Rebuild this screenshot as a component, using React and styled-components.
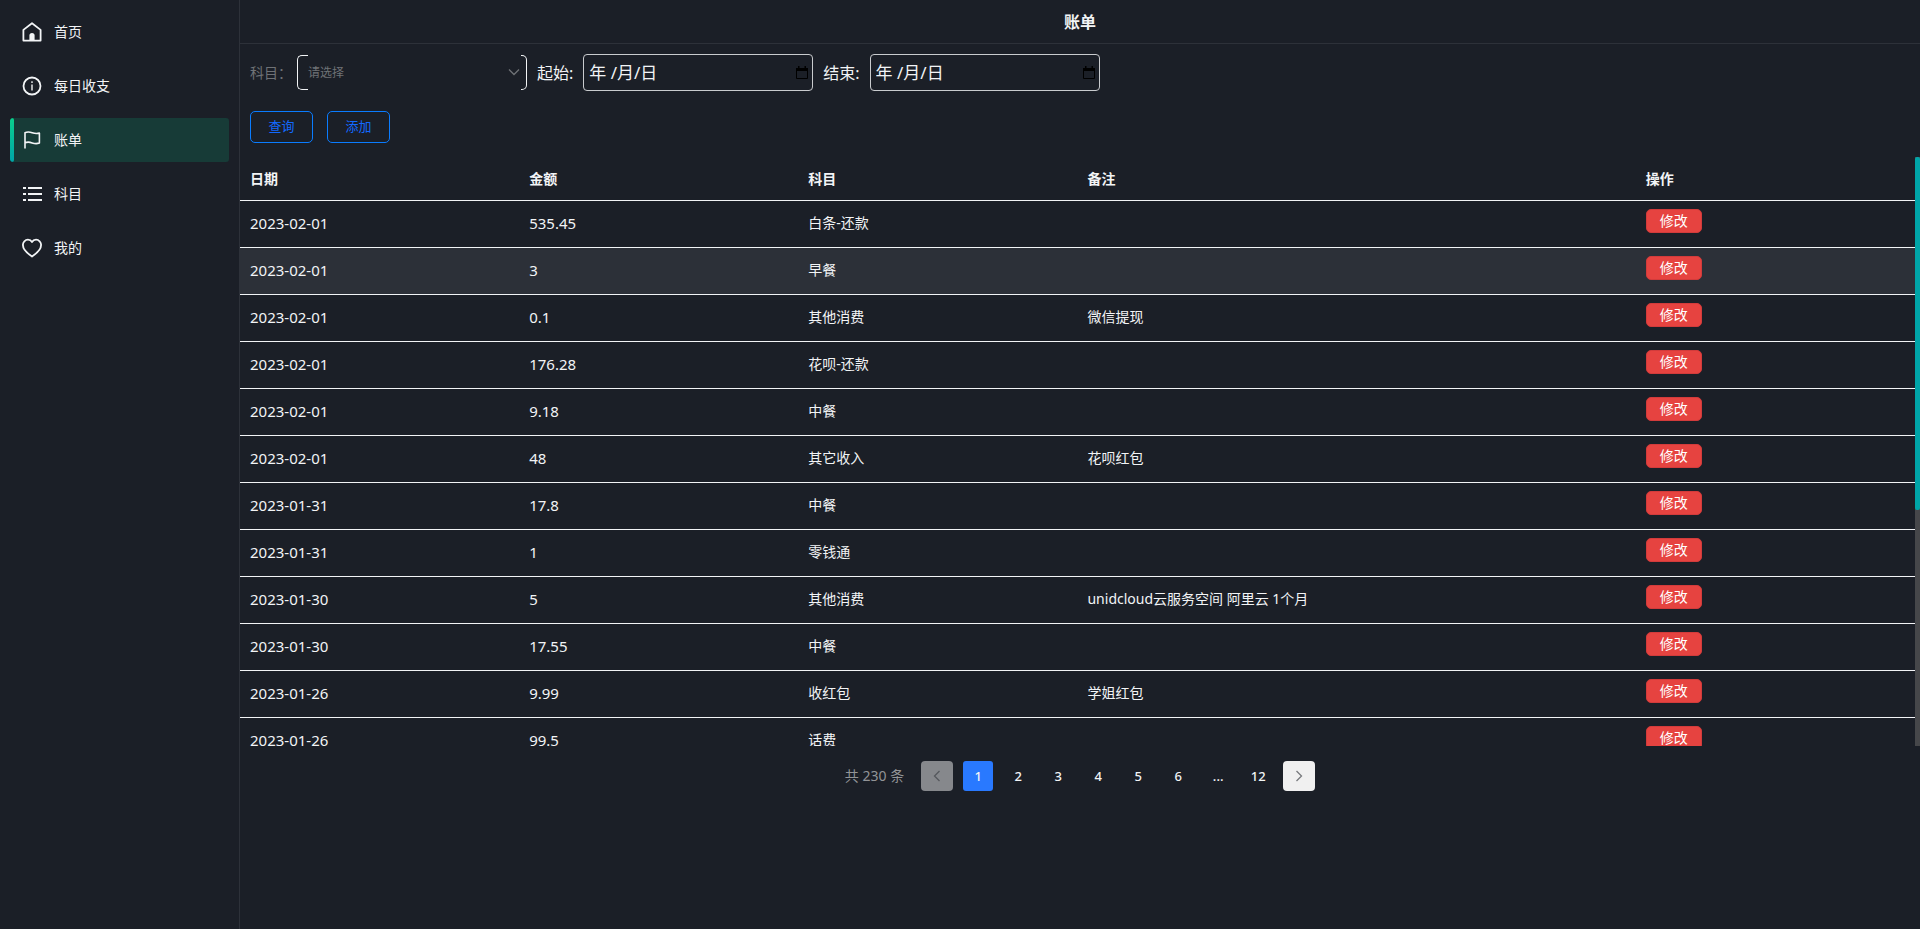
import React from 'react';
import styled, { createGlobalStyle } from 'styled-components';

const GlobalStyle = createGlobalStyle`
  *, *::before, *::after { box-sizing: border-box; }
  body {
    margin: 0;
    background: #1b1f27;
    color: #f2f4f6;
    font-family: "Noto Sans", "Noto Sans CJK SC", sans-serif;
    font-size: 14px;
    line-height: 20px;
  }
  button, input, select { font: inherit; margin: 0; }
`;

const Page = styled.div`
  display: flex;
  min-height: 100vh;
`;

const Sidebar = styled.nav`
  flex: 0 0 240px;
  display: flex;
  flex-direction: column;
  gap: 10px;
  padding: 10px;
  border-right: 1px solid #2d3139;
`;

const NavLink = styled.a`
  display: flex;
  align-items: center;
  gap: 12px;
  height: 44px;
  color: #f2f4f6;
  text-decoration: none;
  border-radius: 3px;
  overflow: hidden;
  background: ${(p) => (p.$active ? '#173b37' : 'transparent')};

  &::before {
    content: "";
    align-self: stretch;
    width: 4px;
    margin-right: -4px;
    border-radius: 2px;
    background: ${(p) => (p.$active ? 'linear-gradient(#0acf8c, #00a5a8)' : 'transparent')};
  }

  svg {
    width: 20px;
    height: 20px;
    flex: none;
  }
`;

const Main = styled.main`
  flex: 1;
  min-width: 0;
`;

const Title = styled.h1`
  margin: 0;
  height: 44px;
  border-bottom: 1px solid #2d3139;
  font-size: 16px;
  font-weight: 600;
  line-height: 44px;
  text-align: center;
`;

const Filters = styled.form`
  display: flex;
  flex-direction: column;
  gap: 20px;
  padding: 10px 10px 14px;
`;

const FieldRow = styled.div`
  display: flex;
  align-items: center;
  gap: 10px;
`;

const SubjectField = styled.div`
  display: flex;
  align-items: center;
  gap: 5px;
  color: #6f7276;
`;

const SelectBox = styled.div`
  position: relative;
  width: 230px;
  height: 35px;

  &::before, &::after {
    content: "";
    position: absolute;
    top: 0;
    bottom: 0;
    border: 1px solid #f2f4f6;
    pointer-events: none;
  }
  &::before {
    left: 0;
    width: 11px;
    border-right: 0;
    border-radius: 5px 0 0 5px;
  }
  &::after {
    right: 0;
    width: 6px;
    border-left: 0;
    border-radius: 0 5px 5px 0;
  }
  svg {
    position: absolute;
    right: 7px;
    top: 11px;
    width: 12px;
    height: 12px;
    pointer-events: none;
  }
`;

const Select = styled.select`
  appearance: none;
  width: 100%;
  height: 100%;
  padding: 0 24px 0 11px;
  border: 0;
  background: transparent;
  color: #6f7276;
  font-size: 12px;
`;

const FieldLabel = styled.label`
  font-size: 16px;
`;

const DateBox = styled.div`
  display: flex;
  align-items: center;
  width: 230px;
  height: 37px;
  padding: 0 3px 0 5px;
  border: 1px solid #c9cbce;
  border-radius: 4px;

  svg {
    width: 14px;
    height: 14px;
    flex: none;
  }
`;

const DateInput = styled.input`
  flex: 1;
  min-width: 0;
  padding: 0;
  border: 0;
  background: transparent;
  color: #f2f4f6;
  font-size: 17px;
`;

const PlainButton = styled.button`
  display: flex;
  width: 14px;
  padding: 0;
  border: 0;
  background: transparent;
`;

const Actions = styled.div`
  display: flex;
  gap: 14px;
`;

const OutlineButton = styled.button`
  width: 63px;
  height: 32px;
  padding: 0 0 2px;
  border: 1px solid #0a7cff;
  border-radius: 5px;
  background: transparent;
  color: #1269ff;
  font-size: 13px;
`;

const TableArea = styled.section`
  display: flex;
  height: calc(100vh - 340px);
`;

const TableScroll = styled.div`
  flex: 1;
  min-width: 0;
  overflow: auto;
  scrollbar-width: none;
`;

const ScrollTrack = styled.div`
  width: 5px;
  background: #46474a;
`;

const ScrollThumb = styled.div`
  height: 60%;
  border-radius: 2px;
  background: #00a5a8;
`;

const Table = styled.table`
  width: 100%;
  table-layout: fixed;
  border-collapse: separate;
  border-spacing: 0;
`;

const HeadCell = styled.th`
  height: 44px;
  padding: 0 10px;
  border-bottom: 1px solid #f2f4f6;
  font-weight: 700;
  text-align: left;
`;

const Row = styled.tr`
  background: ${(p) => (p.$hovered ? '#2c3038' : 'transparent')};
`;

const Cell = styled.td`
  height: 47px;
  padding: 0 10px 2px;
  border-bottom: 1px solid #f2f4f6;
  font-size: ${(p) => (p.$numeric ? '15px' : '14px')};
`;

const ActionCell = styled(Cell)`
  padding-top: 8px;
  vertical-align: top;
`;

const EditButton = styled.button`
  display: block;
  width: 56px;
  height: 24px;
  padding: 0;
  border: 1px solid #d23b3b;
  border-radius: 5px;
  background: #e64340;
  color: #fff;
  font-size: 14px;
  line-height: 20px;
`;

const Pagination = styled.nav`
  display: flex;
  justify-content: center;
  align-items: center;
  gap: 10px;
  padding-top: 15px;
`;

const Total = styled.span`
  margin-right: 7px;
  color: #929497;
`;

const PageButton = styled.button`
  width: 30px;
  height: 30px;
  padding: 0;
  border: 0;
  border-radius: 3px;
  background: ${(p) => (p.$current ? '#2979ff' : 'transparent')};
  color: #f2f4f6;
  font-size: 13px;
  font-weight: 500;
`;

const Ellipsis = styled.span`
  width: 30px;
  font-size: 13px;
  font-weight: 500;
  text-align: center;
`;

const ArrowButton = styled.button`
  display: flex;
  align-items: center;
  justify-content: center;
  width: 32px;
  height: 30px;
  padding: 0;
  border: 0;
  border-radius: 4px;
  background: ${(p) => (p.disabled ? '#86888c' : '#f0f0f0')};
  color: ${(p) => (p.disabled ? '#55585d' : '#77797d')};
`;

const line = { fill: 'none', stroke: 'currentColor', strokeWidth: 1.8 };

const HomeIcon = () => (
  <svg viewBox="0 0 20 20" aria-hidden="true">
    <path d="M1.4 7.9 10 1.2l8.6 6.7v10.700H1.400z" {...line} strokeLinejoin="round" />
    <path d="M7.4 18.6v-5a2.6 2.6 0 0 1 5.2 0v5z" fill="currentColor" />
  </svg>
);

const InfoIcon = () => (
  <svg viewBox="0 0 20 20" aria-hidden="true">
    <circle cx="10" cy="10" r="8.5" {...line} />
    <path d="M10 8.4v6M10 5.2v1.8" {...line} strokeWidth="1.4" />
  </svg>
);

const FlagIcon = () => (
  <svg viewBox="0 0 20 20" aria-hidden="true">
    <path d="M3 18.500V2.800c2.400-1.300 5-.8 7.200-.1 2.300.8 4.600 1 7.200.4v10c-2.600.8-4.900.6-7.200-.2C8 12.100 5.400 11.600 3 12.900" {...line} strokeLinejoin="round" strokeWidth="1.6" />
  </svg>
);

const ListIcon = () => (
  <svg viewBox="0 0 20 20" aria-hidden="true">
    <path d="M1 4h3M6 4h14M1 10h3M6 10h14M1 16h3M6 16h14" {...line} />
  </svg>
);

const HeartIcon = () => (
  <svg viewBox="0 0 20 20" aria-hidden="true">
    <path d="M10 18.500C5.500 15.500.9 12 .9 7A5.200 5.200 0 0 1 6 1.700c1.700 0 3.200.9 4 2.300.8-1.400 2.300-2.300 4-2.300A5.200 5.200 0 0 1 19.100 7c0 5-4.600 8.500-9.100 11.500z" {...line} strokeLinejoin="round" />
  </svg>
);

const CalendarIcon = () => (
  <svg viewBox="0 0 14 14" aria-hidden="true">
    <path d="M1.500 2.500h11v10h-11z" fill="none" stroke="#000" />
    <path d="M1 2h12v3H1zM3 0h1.500v2H3zM9.500 0H11v2H9.500z" fill="#000" />
  </svg>
);

const Chevron = ({ d }) => (
  <svg width="12" height="12" viewBox="0 0 12 12" aria-hidden="true">
    <path d={d} fill="none" stroke="currentColor" strokeWidth="1.3" />
  </svg>
);

const navItems = [
  ['首页', HomeIcon],
  ['每日收支', InfoIcon],
  ['账单', FlagIcon],
  ['科目', ListIcon],
  ['我的', HeartIcon],
];

const bills = [
  ['2023-02-01', '535.45', '白条-还款', ''],
  ['2023-02-01', '3', '早餐', ''],
  ['2023-02-01', '0.1', '其他消费', '微信提现'],
  ['2023-02-01', '176.28', '花呗-还款', ''],
  ['2023-02-01', '9.18', '中餐', ''],
  ['2023-02-01', '48', '其它收入', '花呗红包'],
  ['2023-01-31', '17.8', '中餐', ''],
  ['2023-01-31', '1', '零钱通', ''],
  ['2023-01-30', '5', '其他消费', 'unidcloud云服务空间 阿里云 1个月'],
  ['2023-01-30', '17.55', '中餐', ''],
  ['2023-01-26', '9.99', '收红包', '学姐红包'],
  ['2023-01-26', '99.5', '话费', ''],
];

const DateField = ({ id, label }) => (
  <>
    <FieldLabel htmlFor={id}>{label}</FieldLabel>
    <DateBox>
      <DateInput id={id} type="text" defaultValue="年 /月/日" />
      <PlainButton type="button" aria-label="选择日期">
        <CalendarIcon />
      </PlainButton>
    </DateBox>
  </>
);

export default function App() {
  return (
    <>
      <GlobalStyle />
      <Page>
        <Sidebar>
          {navItems.map(([name, Icon]) => (
            <NavLink href="#" key={name} $active={name === '账单'}>
              <Icon />
              {name}
            </NavLink>
          ))}
        </Sidebar>
        <Main>
          <Title>账单</Title>
          <Filters onSubmit={(e) => e.preventDefault()}>
            <FieldRow>
              <SubjectField>
                <label htmlFor="subject">科目：</label>
                <SelectBox>
                  <Select id="subject">
                    <option>请选择</option>
                  </Select>
                  <Chevron d="M1 3.500l5 5 5-5" />
                </SelectBox>
              </SubjectField>
              <DateField id="start" label="起始:" />
              <DateField id="end" label="结束:" />
            </FieldRow>
            <Actions>
              <OutlineButton type="submit">查询</OutlineButton>
              <OutlineButton type="button">添加</OutlineButton>
            </Actions>
          </Filters>
          <TableArea>
            <TableScroll>
              <Table>
                <thead>
                  <tr>
                    <HeadCell>日期</HeadCell>
                    <HeadCell>金额</HeadCell>
                    <HeadCell>科目</HeadCell>
                    <HeadCell colSpan={2}>备注</HeadCell>
                    <HeadCell>操作</HeadCell>
                  </tr>
                </thead>
                <tbody>
                  {bills.map(([date, amount, subject, note], i) => (
                    <Row key={i} $hovered={i === 1}>
                      <Cell $numeric>{date}</Cell>
                      <Cell $numeric>{amount}</Cell>
                      <Cell>{subject}</Cell>
                      <Cell colSpan={2}>{note}</Cell>
                      <ActionCell>
                        <EditButton type="button">修改</EditButton>
                      </ActionCell>
                    </Row>
                  ))}
                </tbody>
              </Table>
            </TableScroll>
            <ScrollTrack>
              <ScrollThumb />
            </ScrollTrack>
          </TableArea>
          <Pagination aria-label="分页">
            <Total>共 230 条</Total>
            <ArrowButton type="button" disabled aria-label="上一页">
              <Chevron d="M8.500 1l-5 5 5 5" />
            </ArrowButton>
            {['1', '2', '3', '4', '5', '6'].map((n) => (
              <PageButton type="button" key={n} $current={n === '1'}>{n}</PageButton>
            ))}
            <Ellipsis>...</Ellipsis>
            <PageButton type="button">12</PageButton>
            <ArrowButton type="button" aria-label="下一页">
              <Chevron d="M3.500 1l5 5-5 5" />
            </ArrowButton>
          </Pagination>
        </Main>
      </Page>
    </>
  );
}
